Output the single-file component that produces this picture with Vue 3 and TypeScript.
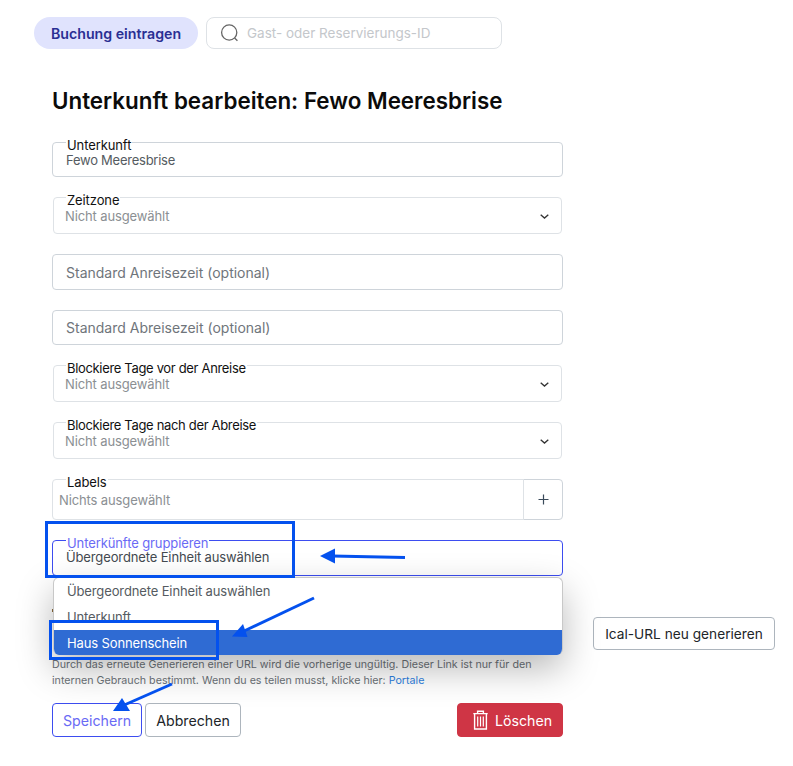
<script setup lang="ts">
const after = [
  { label: 'Blockiere Tage vor der Anreise' },
  { label: 'Blockiere Tage nach der Abreise' },
]
</script>

<template>
  <div class="page">
    <header class="topbar">
      <button class="pill">Buchung eintragen</button>
      <div class="search">
        <svg class="search-icon" width="22" height="22" viewBox="0 0 22 22" fill="none" stroke="#666" stroke-width="1.3"><circle cx="10.2" cy="10.5" r="7.6" /><path d="M15.6 16l2.8 2.8" /></svg>
        <span>Gast- oder Reservierungs-ID</span>
      </div>
    </header>

    <h1>Unterkunft bearbeiten: Fewo Meeresbrise</h1>

    <form class="form">
      <div class="field h35">
        <label class="legend">Unterkunft</label>
        <span class="value">Fewo Meeresbrise</span>
      </div>
      <div class="field select h37">
        <label class="legend">Zeitzone</label>
        <span class="value muted">Nicht ausgewählt</span>
        <svg class="chev" width="9" height="5" viewBox="0 0 9 5" fill="none" stroke="#333" stroke-width="1.3"><path d="M0.7 0.7l3.8 3.4 3.8-3.4" /></svg>
      </div>
      <div class="field plain h36"><span class="ph">Standard Anreisezeit (optional)</span></div>
      <div class="field plain h35"><span class="ph">Standard Abreisezeit (optional)</span></div>
      <div v-for="s in after" :key="s.label" class="field select h37">
        <label class="legend tight">{{ s.label }}</label>
        <span class="value muted">Nicht ausgewählt</span>
        <svg class="chev" width="9" height="5" viewBox="0 0 9 5" fill="none" stroke="#333" stroke-width="1.3"><path d="M0.7 0.7l3.8 3.4 3.8-3.4" /></svg>
      </div>
      <div class="labels">
        <div class="labels-main">
          <label class="legend">Labels</label>
          <span class="value muted labels-value">Nichts ausgewählt</span>
        </div>
        <div class="plus">
          <svg width="11" height="11" viewBox="0 0 11 11" stroke="#3a4a5a" stroke-width="1.2"><path d="M5.5 0.5v10M0.5 5.5h10" /></svg>
        </div>
      </div>
      <div class="group-wrap">
        <div class="field focus h36">
          <label class="legend legend-focus">Unterkünfte gruppieren</label>
          <span class="value dark">Übergeordnete Einheit auswählen</span>
        </div>
        <ul class="menu">
          <li>Übergeordnete Einheit auswählen</li>
          <li>Unterkunft</li>
          <li class="active">Haus Sonnenschein</li>
        </ul>
      </div>
      <div class="url-row">
        <i class="url-mark"></i>
        <button type="button" class="ical">Ical-URL neu generieren</button>
      </div>
    </form>

    <p class="help">
      Durch das erneute Generieren einer URL wird die vorherige ungültig. Dieser Link ist nur für den<br />
      internen Gebrauch bestimmt. Wenn du es teilen musst, klicke hier: <a>Portale</a>
    </p>

    <footer class="actions">
      <div class="left">
        <button class="btn primary">Speichern</button>
        <button class="btn cancel">Abbrechen</button>
      </div>
      <button class="btn danger">
        <svg width="15" height="20" viewBox="0 0 15 20" fill="none" stroke="#fff" stroke-width="1.4"><path d="M0.3 3.6h14.4M4.6 3.4V1.2h5.8v2.2M1.6 3.6v15.4h11.8V3.6" /><path d="M4.7 6.5v10M7.5 6.5v10M10.3 6.5v10" stroke-width="1.2" /></svg>
        Löschen
      </button>
    </footer>

    <svg class="notes" width="793" height="766" viewBox="0 0 793 766" fill="none">
      <rect x="46.5" y="522.5" width="247" height="54" stroke="#0451ee" stroke-width="3" />
      <rect x="50.5" y="621.5" width="167" height="37" stroke="#0451ee" stroke-width="3" />
      <path d="M405 557.5L332 556" stroke="#0451ee" stroke-width="3" />
      <path d="M320 556l15-7.5v15z" fill="#0451ee" />
      <path d="M314 598L242 632" stroke="#0451ee" stroke-width="3" />
      <path d="M232 636.5l11-12.5 4.5 13z" fill="#0451ee" />
      <path d="M172 684L122 706" stroke="#0451ee" stroke-width="3" />
      <path d="M113 711l9-13 8 13z" fill="#0451ee" />
    </svg>
  </div>
</template>

<style>
body { background: #fff; }
</style>

<style scoped>
.page {
  position: relative;
  width: 793px;
  height: 766px;
  overflow: hidden;
  padding: 17px 0 0 52px;
  box-sizing: border-box;
  font-family: Inter, "Noto Sans", sans-serif;
  background: #fff;
  color: #212529;
}
.topbar { display: flex; gap: 8px; margin-left: -18px; height: 32px; }
.pill {
  width: 164px;
  border: 0;
  border-radius: 16px;
  background: #e0e3fd;
  color: #2a2f93;
  font: 600 14.2px Inter, sans-serif;
  padding: 0;
}
.search {
  width: 296px;
  box-sizing: border-box;
  border: 1px solid #dee2e6;
  border-radius: 8px;
  display: flex;
  align-items: center;
  padding-left: 12px;
  gap: 6px;
  font-size: 13.5px;
  color: #c4c7cb;
}
.search-icon { flex: none; }
h1 {
  margin: 39px 0 0;
  font-size: 22.4px;
  line-height: 26px;
  font-weight: 600;
  color: #0b0b0b;
  height: 26px;
}
.form { margin-top: 28px; width: 511px; display: flex; flex-direction: column; gap: 20px; }
.field {
  position: relative;
  box-sizing: border-box;
  border: 1px solid #ced4da;
  border-radius: 4px;
  display: flex;
  align-items: flex-end;
  padding: 0 13px 8px;
  font-size: 13px;
  line-height: 16px;
}
.h35 { height: 35px; }
.h36 { height: 36px; }
.h37 { height: 37px; }
.select { margin: 0 1px; padding: 0 11px 9px; border-color: #dee2e6; }
.plain { align-items: center; padding-bottom: 0; }
.plain.h36 { padding-top: 1px; }
.legend {
  position: absolute;
  left: 13px;
  top: -5px;
  background: #fff;
  padding: 0 1px;
  line-height: 14px;
  font-size: 13px;
  color: #111;
  letter-spacing: -0.1px;
}
.tight { letter-spacing: -0.33px; }
.select .legend { left: 12px; top: -5px; }
.value { color: #555b61; letter-spacing: -0.25px; }
.muted { color: #8b8f93; letter-spacing: -0.12px; }
.dark { color: #444a50; letter-spacing: -0.13px; }
.ph { color: #6f757b; font-size: 14px; }
.chev { position: absolute; right: 12px; top: 16px; }
.labels { display: flex; height: 41px; }
.labels-main {
  position: relative;
  flex: 1;
  border: 1px solid #dee2e6;
  border-radius: 4px 0 0 4px;
  display: flex;
  align-items: flex-end;
  padding: 0 6px 11px;
  font-size: 13px;
  line-height: 16px;
}
.labels-value { display: block; }
.plus {
  width: 38px;
  border: 1px solid #ced4da;
  margin-left: -1px;
  border-radius: 0 4px 4px 0;
  display: flex;
  align-items: center;
  justify-content: center;
}
.group-wrap { position: relative; }
.focus { border-color: #3d4df0; align-items: flex-end; padding-bottom: 10px; }
.legend-focus { color: #6a6af5; }
.menu {
  position: absolute;
  z-index: 2;
  left: 1px;
  right: 0;
  top: 37px;
  margin: 0;
  padding: 0;
  list-style: none;
  height: 78px;
  background: #fff;
  border: 1px solid #c8c8c8;
  border-bottom: 0;
  border-radius: 6px;
  overflow: hidden;
  box-shadow: 0 14px 36px rgba(0, 0, 0, 0.28);
  font-size: 13px;
  letter-spacing: -0.13px;
  color: #555b61;
  box-sizing: border-box;
}
.menu li { height: 26px; line-height: 26px; padding-left: 13px; }
.menu li.active { background: #2f6bd3; color: #fff; }
.url-row { height: 54px; position: relative; }
.url-mark { position: absolute; left: 0; top: 13px; width: 1px; height: 3px; background: #8a6a3a; }
.ical {
  position: absolute;
  left: 541px;
  top: 21px;
  width: 182px;
  height: 33px;
  background: #fff;
  border: 1px solid #adb5bd;
  border-radius: 4px;
  font: 13.7px Inter, sans-serif;
  color: #212529;
  padding: 0;
  white-space: nowrap;
}
.help {
  margin: 7px 0 0;
  font-size: 10.7px;
  line-height: 16px;
  color: #6c7278;
  width: 511px;
  white-space: nowrap;
}
.help a { color: #2f7fe0; }
.actions { margin-top: 14px; width: 511px; display: flex; justify-content: space-between; }
.left { display: flex; gap: 3px; }
.btn {
  height: 34px;
  box-sizing: border-box;
  background: #fff;
  border: 1px solid #adb5bd;
  border-radius: 4px;
  font: 14.2px Inter, sans-serif;
  color: #212529;
  padding: 0;
  display: flex;
  align-items: center;
  justify-content: center;
}
.primary { width: 90px; border-color: #3d4df0; color: #6a6af5; }
.cancel { width: 96px; }
.danger { width: 106px; background: #cf3545; border-color: #cf3545; color: #fff; gap: 7px; justify-content: flex-start; padding-left: 15px; }
.notes { position: absolute; left: 0; top: 0; z-index: 5; pointer-events: none; }
</style>
